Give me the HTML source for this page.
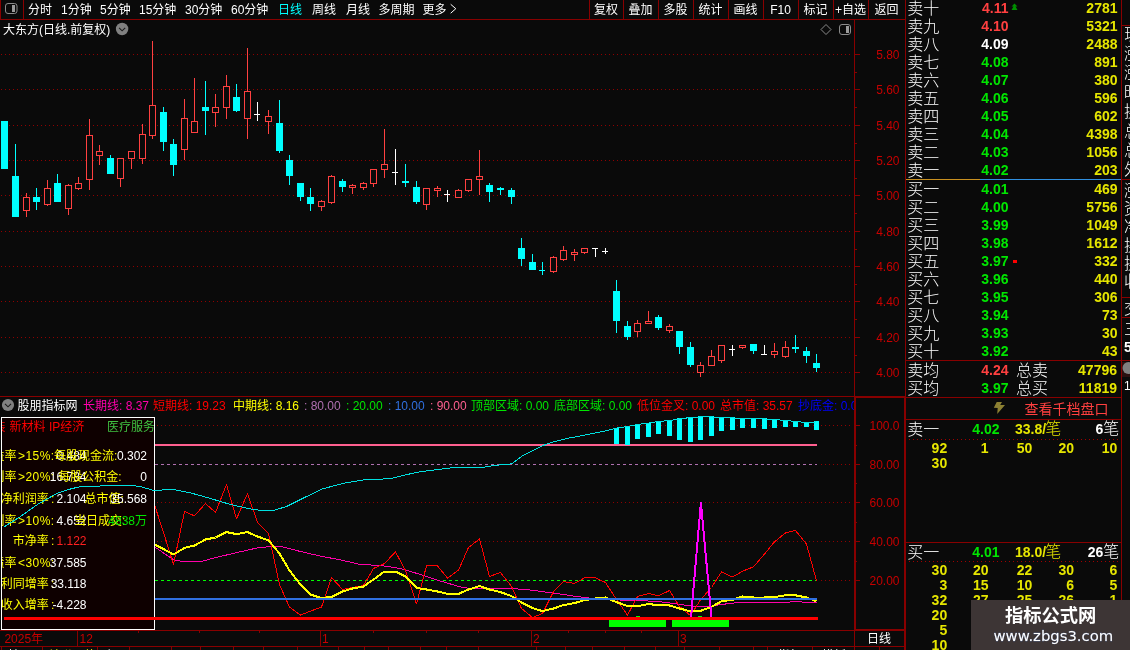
<!DOCTYPE html>
<html lang="zh-CN"><head><meta charset="utf-8"><title>大东方(日线.前复权)</title>
<style>html,body{margin:0;padding:0;background:#0a0a0a;overflow:hidden}body{width:1130px;height:650px;position:relative}svg{position:absolute;left:0;top:0;display:block;will-change:transform}svg text{font-family:'Liberation Sans','Noto Sans CJK SC',sans-serif;font-size:12px;white-space:pre}.g{shape-rendering:crispEdges}.aa{shape-rendering:geometricPrecision}</style>
</head><body>
<svg width="1130" height="650" viewBox="0 0 1130 650">
<rect width="1130" height="650" fill="#0a0a0a"/>
<defs><clipPath id="cpInd"><rect x="0" y="398" width="854" height="232"/></clipPath><clipPath id="cpBox"><rect x="2" y="418" width="152" height="211"/></clipPath><clipPath id="cpHdr"><rect x="0" y="398" width="854" height="18"/></clipPath><clipPath id="cpStrip"><rect x="1122" y="0" width="8" height="650"/></clipPath><clipPath id="cpBot"><rect x="0" y="648" width="1130" height="2"/></clipPath></defs>
<g class="g">
<line x1="1" y1="54.5" x2="851" y2="54.5" stroke="#900000" stroke-width="1" stroke-dasharray="1 3"/>
<line x1="1" y1="89.5" x2="851" y2="89.5" stroke="#900000" stroke-width="1" stroke-dasharray="1 3"/>
<line x1="1" y1="125.5" x2="851" y2="125.5" stroke="#900000" stroke-width="1" stroke-dasharray="1 3"/>
<line x1="1" y1="160.5" x2="851" y2="160.5" stroke="#900000" stroke-width="1" stroke-dasharray="1 3"/>
<line x1="1" y1="195.5" x2="851" y2="195.5" stroke="#900000" stroke-width="1" stroke-dasharray="1 3"/>
<line x1="1" y1="231.5" x2="851" y2="231.5" stroke="#900000" stroke-width="1" stroke-dasharray="1 3"/>
<line x1="1" y1="266.5" x2="851" y2="266.5" stroke="#900000" stroke-width="1" stroke-dasharray="1 3"/>
<line x1="1" y1="301.5" x2="851" y2="301.5" stroke="#900000" stroke-width="1" stroke-dasharray="1 3"/>
<line x1="1" y1="337.5" x2="851" y2="337.5" stroke="#900000" stroke-width="1" stroke-dasharray="1 3"/>
<line x1="1" y1="372.5" x2="851" y2="372.5" stroke="#900000" stroke-width="1" stroke-dasharray="1 3"/>
<rect x="0" y="19" width="905" height="1" fill="#880000"/>
<rect x="0" y="0" width="1" height="20" fill="#880000"/>
<rect x="23" y="0" width="1" height="20" fill="#880000"/>
<rect x="589" y="0" width="1" height="19" fill="#880000"/>
<rect x="623" y="0" width="1" height="19" fill="#880000"/>
<rect x="658" y="0" width="1" height="19" fill="#880000"/>
<rect x="693" y="0" width="1" height="19" fill="#880000"/>
<rect x="728" y="0" width="1" height="19" fill="#880000"/>
<rect x="763" y="0" width="1" height="19" fill="#880000"/>
<rect x="798" y="0" width="1" height="19" fill="#880000"/>
<rect x="833" y="0" width="1" height="19" fill="#880000"/>
<rect x="868" y="0" width="1" height="19" fill="#880000"/>
<rect x="854" y="20" width="1" height="376" fill="#880000"/>
<rect x="905" y="0" width="1" height="397" fill="#880000"/>
<rect x="0" y="396" width="854" height="1" fill="#880000"/>
<rect x="855" y="54" width="5" height="1" fill="#880000"/>
<rect x="855" y="72" width="2" height="1" fill="#880000"/>
<rect x="855" y="89" width="5" height="1" fill="#880000"/>
<rect x="855" y="107" width="2" height="1" fill="#880000"/>
<rect x="855" y="125" width="5" height="1" fill="#880000"/>
<rect x="855" y="143" width="2" height="1" fill="#880000"/>
<rect x="855" y="160" width="5" height="1" fill="#880000"/>
<rect x="855" y="178" width="2" height="1" fill="#880000"/>
<rect x="855" y="195" width="5" height="1" fill="#880000"/>
<rect x="855" y="213" width="2" height="1" fill="#880000"/>
<rect x="855" y="231" width="5" height="1" fill="#880000"/>
<rect x="855" y="249" width="2" height="1" fill="#880000"/>
<rect x="855" y="266" width="5" height="1" fill="#880000"/>
<rect x="855" y="284" width="2" height="1" fill="#880000"/>
<rect x="855" y="301" width="5" height="1" fill="#880000"/>
<rect x="855" y="319" width="2" height="1" fill="#880000"/>
<rect x="855" y="337" width="5" height="1" fill="#880000"/>
<rect x="855" y="355" width="2" height="1" fill="#880000"/>
<rect x="855" y="372" width="5" height="1" fill="#880000"/>
</g>
<g class="g">
<rect x="1" y="121" width="7" height="48" fill="#00ffff"/>
<rect x="15" y="144" width="1" height="32" fill="#00ffff"/>
<rect x="12" y="176" width="7" height="41" fill="#00ffff"/>
<rect x="26" y="193" width="1" height="4" fill="#ff4040"/>
<rect x="23.5" y="197.5" width="6" height="13" fill="#0a0a0a" stroke="#ff4040" stroke-width="1"/>
<rect x="26" y="211" width="1" height="6" fill="#ff4040"/>
<rect x="36" y="188" width="1" height="9" fill="#00ffff"/>
<rect x="33" y="197" width="7" height="5" fill="#00ffff"/>
<rect x="36" y="202" width="1" height="8" fill="#00ffff"/>
<rect x="47" y="180" width="1" height="8" fill="#ff4040"/>
<rect x="44.5" y="188.5" width="6" height="16" fill="#0a0a0a" stroke="#ff4040" stroke-width="1"/>
<rect x="47" y="205" width="1" height="1" fill="#ff4040"/>
<rect x="57" y="174" width="1" height="9" fill="#00ffff"/>
<rect x="54" y="183" width="7" height="19" fill="#00ffff"/>
<rect x="68" y="184" width="1" height="1" fill="#ff4040"/>
<rect x="65.5" y="185.5" width="6" height="23" fill="#0a0a0a" stroke="#ff4040" stroke-width="1"/>
<rect x="68" y="209" width="1" height="6" fill="#ff4040"/>
<rect x="78" y="177" width="1" height="6" fill="#ff4040"/>
<rect x="75.5" y="183.5" width="6" height="5" fill="#0a0a0a" stroke="#ff4040" stroke-width="1"/>
<rect x="78" y="189" width="1" height="1" fill="#ff4040"/>
<rect x="89" y="119" width="1" height="16" fill="#ff4040"/>
<rect x="86.5" y="135.5" width="6" height="44" fill="#0a0a0a" stroke="#ff4040" stroke-width="1"/>
<rect x="89" y="180" width="1" height="10" fill="#ff4040"/>
<rect x="99" y="145" width="1" height="6" fill="#ff4040"/>
<rect x="96.5" y="151.5" width="6" height="4" fill="#0a0a0a" stroke="#ff4040" stroke-width="1"/>
<rect x="99" y="156" width="1" height="9" fill="#ff4040"/>
<rect x="110" y="155" width="1" height="3" fill="#00ffff"/>
<rect x="107" y="158" width="7" height="16" fill="#00ffff"/>
<rect x="117.5" y="158.5" width="6" height="20" fill="#0a0a0a" stroke="#ff4040" stroke-width="1"/>
<rect x="120" y="179" width="1" height="8" fill="#ff4040"/>
<rect x="128.5" y="151.5" width="6" height="7" fill="#0a0a0a" stroke="#ff4040" stroke-width="1"/>
<rect x="131" y="159" width="1" height="10" fill="#ff4040"/>
<rect x="142" y="124" width="1" height="10" fill="#ff4040"/>
<rect x="139.5" y="134.5" width="6" height="24" fill="#0a0a0a" stroke="#ff4040" stroke-width="1"/>
<rect x="142" y="159" width="1" height="5" fill="#ff4040"/>
<rect x="152" y="41" width="1" height="64" fill="#ff4040"/>
<rect x="149.5" y="105.5" width="6" height="30" fill="#0a0a0a" stroke="#ff4040" stroke-width="1"/>
<rect x="152" y="136" width="1" height="3" fill="#ff4040"/>
<rect x="163" y="107" width="1" height="5" fill="#00ffff"/>
<rect x="160" y="112" width="7" height="30" fill="#00ffff"/>
<rect x="163" y="142" width="1" height="9" fill="#00ffff"/>
<rect x="173" y="139" width="1" height="5" fill="#00ffff"/>
<rect x="170" y="144" width="7" height="21" fill="#00ffff"/>
<rect x="173" y="165" width="1" height="11" fill="#00ffff"/>
<rect x="184" y="99" width="1" height="19" fill="#ff4040"/>
<rect x="181.5" y="118.5" width="6" height="31" fill="#0a0a0a" stroke="#ff4040" stroke-width="1"/>
<rect x="184" y="150" width="1" height="10" fill="#ff4040"/>
<rect x="194" y="78" width="1" height="43" fill="#ff4040"/>
<rect x="191.5" y="121.5" width="6" height="11" fill="#0a0a0a" stroke="#ff4040" stroke-width="1"/>
<rect x="205" y="81" width="1" height="26" fill="#00ffff"/>
<rect x="202" y="107" width="7" height="4" fill="#00ffff"/>
<rect x="205" y="111" width="1" height="24" fill="#00ffff"/>
<rect x="215" y="94" width="1" height="13" fill="#ff4040"/>
<rect x="212.5" y="107.5" width="6" height="5" fill="#0a0a0a" stroke="#ff4040" stroke-width="1"/>
<rect x="215" y="113" width="1" height="14" fill="#ff4040"/>
<rect x="226" y="75" width="1" height="11" fill="#ff4040"/>
<rect x="223.5" y="86.5" width="6" height="21" fill="#0a0a0a" stroke="#ff4040" stroke-width="1"/>
<rect x="226" y="108" width="1" height="11" fill="#ff4040"/>
<rect x="236" y="84" width="1" height="13" fill="#00ffff"/>
<rect x="233" y="97" width="7" height="14" fill="#00ffff"/>
<rect x="236" y="111" width="1" height="1" fill="#00ffff"/>
<rect x="247" y="48" width="1" height="43" fill="#ff4040"/>
<rect x="244.5" y="91.5" width="6" height="27" fill="#0a0a0a" stroke="#ff4040" stroke-width="1"/>
<rect x="247" y="119" width="1" height="20" fill="#ff4040"/>
<rect x="257" y="102" width="1" height="19" fill="#ffffff"/>
<rect x="254" y="114" width="6" height="1" fill="#ffffff"/>
<rect x="268" y="110" width="1" height="6" fill="#ff4040"/>
<rect x="265.5" y="116.5" width="6" height="5" fill="#0a0a0a" stroke="#ff4040" stroke-width="1"/>
<rect x="268" y="122" width="1" height="12" fill="#ff4040"/>
<rect x="279" y="100" width="1" height="23" fill="#00ffff"/>
<rect x="276" y="123" width="7" height="28" fill="#00ffff"/>
<rect x="279" y="151" width="1" height="2" fill="#00ffff"/>
<rect x="289" y="155" width="1" height="5" fill="#00ffff"/>
<rect x="286" y="160" width="7" height="16" fill="#00ffff"/>
<rect x="289" y="176" width="1" height="9" fill="#00ffff"/>
<rect x="297" y="183" width="7" height="14" fill="#00ffff"/>
<rect x="300" y="197" width="1" height="4" fill="#00ffff"/>
<rect x="310" y="188" width="1" height="9" fill="#00ffff"/>
<rect x="307" y="197" width="7" height="7" fill="#00ffff"/>
<rect x="310" y="204" width="1" height="7" fill="#00ffff"/>
<rect x="321" y="200" width="1" height="1" fill="#ff4040"/>
<rect x="318.5" y="201.5" width="6" height="5" fill="#0a0a0a" stroke="#ff4040" stroke-width="1"/>
<rect x="321" y="207" width="1" height="4" fill="#ff4040"/>
<rect x="331" y="175" width="1" height="1" fill="#ff4040"/>
<rect x="328.5" y="176.5" width="6" height="26" fill="#0a0a0a" stroke="#ff4040" stroke-width="1"/>
<rect x="331" y="203" width="1" height="1" fill="#ff4040"/>
<rect x="342" y="179" width="1" height="2" fill="#00ffff"/>
<rect x="339" y="181" width="7" height="6" fill="#00ffff"/>
<rect x="342" y="187" width="1" height="5" fill="#00ffff"/>
<rect x="352" y="184" width="1" height="1" fill="#ff4040"/>
<rect x="349.5" y="185.5" width="6" height="2" fill="#0a0a0a" stroke="#ff4040" stroke-width="1"/>
<rect x="352" y="188" width="1" height="6" fill="#ff4040"/>
<rect x="363" y="182" width="1" height="1" fill="#ff4040"/>
<rect x="360.5" y="183.5" width="6" height="4" fill="#0a0a0a" stroke="#ff4040" stroke-width="1"/>
<rect x="363" y="188" width="1" height="2" fill="#ff4040"/>
<rect x="370.5" y="169.5" width="6" height="14" fill="#0a0a0a" stroke="#ff4040" stroke-width="1"/>
<rect x="373" y="184" width="1" height="3" fill="#ff4040"/>
<rect x="384" y="129" width="1" height="35" fill="#ff4040"/>
<rect x="381.5" y="164.5" width="6" height="5" fill="#0a0a0a" stroke="#ff4040" stroke-width="1"/>
<rect x="384" y="170" width="1" height="8" fill="#ff4040"/>
<rect x="395" y="149" width="1" height="36" fill="#ffffff"/>
<rect x="392" y="172" width="6" height="1" fill="#ffffff"/>
<rect x="405" y="164" width="1" height="17" fill="#00ffff"/>
<rect x="402" y="181" width="7" height="2" fill="#00ffff"/>
<rect x="405" y="183" width="1" height="4" fill="#00ffff"/>
<rect x="416" y="181" width="1" height="6" fill="#00ffff"/>
<rect x="413" y="187" width="7" height="15" fill="#00ffff"/>
<rect x="416" y="202" width="1" height="2" fill="#00ffff"/>
<rect x="423.5" y="188.5" width="6" height="16" fill="#0a0a0a" stroke="#ff4040" stroke-width="1"/>
<rect x="426" y="205" width="1" height="5" fill="#ff4040"/>
<rect x="437" y="186" width="1" height="2" fill="#ff4040"/>
<rect x="434.5" y="188.5" width="6" height="2" fill="#0a0a0a" stroke="#ff4040" stroke-width="1"/>
<rect x="437" y="191" width="1" height="6" fill="#ff4040"/>
<rect x="447" y="190" width="1" height="12" fill="#ffffff"/>
<rect x="444" y="194" width="6" height="1" fill="#ffffff"/>
<rect x="458" y="189" width="1" height="1" fill="#ff4040"/>
<rect x="455.5" y="190.5" width="6" height="7" fill="#0a0a0a" stroke="#ff4040" stroke-width="1"/>
<rect x="465.5" y="179.5" width="6" height="11" fill="#0a0a0a" stroke="#ff4040" stroke-width="1"/>
<rect x="468" y="191" width="1" height="1" fill="#ff4040"/>
<rect x="479" y="150" width="1" height="26" fill="#ff4040"/>
<rect x="476.5" y="176.5" width="6" height="3" fill="#0a0a0a" stroke="#ff4040" stroke-width="1"/>
<rect x="479" y="180" width="1" height="15" fill="#ff4040"/>
<rect x="489" y="183" width="1" height="2" fill="#00ffff"/>
<rect x="486" y="185" width="7" height="7" fill="#00ffff"/>
<rect x="489" y="192" width="1" height="10" fill="#00ffff"/>
<rect x="500" y="187" width="1" height="1" fill="#00ffff"/>
<rect x="497" y="188" width="7" height="2" fill="#00ffff"/>
<rect x="500" y="190" width="1" height="5" fill="#00ffff"/>
<rect x="511" y="188" width="1" height="2" fill="#00ffff"/>
<rect x="508" y="190" width="7" height="7" fill="#00ffff"/>
<rect x="511" y="197" width="1" height="7" fill="#00ffff"/>
<rect x="521" y="238" width="1" height="10" fill="#00ffff"/>
<rect x="518" y="248" width="7" height="11" fill="#00ffff"/>
<rect x="521" y="259" width="1" height="7" fill="#00ffff"/>
<rect x="532" y="254" width="1" height="8" fill="#00ffff"/>
<rect x="529" y="262" width="7" height="8" fill="#00ffff"/>
<rect x="542" y="262" width="1" height="13" fill="#00ffff"/>
<rect x="539" y="270" width="6" height="1" fill="#00ffff"/>
<rect x="553" y="256" width="1" height="1" fill="#ff4040"/>
<rect x="550.5" y="257.5" width="6" height="14" fill="#0a0a0a" stroke="#ff4040" stroke-width="1"/>
<rect x="553" y="272" width="1" height="1" fill="#ff4040"/>
<rect x="563" y="246" width="1" height="4" fill="#ff4040"/>
<rect x="560.5" y="250.5" width="6" height="9" fill="#0a0a0a" stroke="#ff4040" stroke-width="1"/>
<rect x="563" y="260" width="1" height="1" fill="#ff4040"/>
<rect x="574" y="249" width="1" height="3" fill="#ff4040"/>
<rect x="571.5" y="252.5" width="6" height="2" fill="#0a0a0a" stroke="#ff4040" stroke-width="1"/>
<rect x="574" y="255" width="1" height="6" fill="#ff4040"/>
<rect x="581.5" y="248.5" width="6" height="4" fill="#0a0a0a" stroke="#ff4040" stroke-width="1"/>
<rect x="584" y="253" width="1" height="1" fill="#ff4040"/>
<rect x="595" y="248" width="1" height="9" fill="#ffffff"/>
<rect x="592" y="248" width="6" height="1" fill="#ffffff"/>
<rect x="605" y="248" width="1" height="6" fill="#ffffff"/>
<rect x="602" y="251" width="6" height="1" fill="#ffffff"/>
<rect x="616" y="280" width="1" height="11" fill="#00ffff"/>
<rect x="613" y="291" width="7" height="30" fill="#00ffff"/>
<rect x="616" y="321" width="1" height="12" fill="#00ffff"/>
<rect x="627" y="321" width="1" height="5" fill="#00ffff"/>
<rect x="624" y="326" width="7" height="11" fill="#00ffff"/>
<rect x="627" y="337" width="1" height="3" fill="#00ffff"/>
<rect x="637" y="320" width="1" height="3" fill="#ff4040"/>
<rect x="634.5" y="323.5" width="6" height="8" fill="#0a0a0a" stroke="#ff4040" stroke-width="1"/>
<rect x="637" y="332" width="1" height="5" fill="#ff4040"/>
<rect x="648" y="311" width="1" height="10" fill="#ff4040"/>
<rect x="645.5" y="321.5" width="6" height="2" fill="#0a0a0a" stroke="#ff4040" stroke-width="1"/>
<rect x="658" y="315" width="1" height="2" fill="#00ffff"/>
<rect x="655" y="317" width="7" height="11" fill="#00ffff"/>
<rect x="658" y="328" width="1" height="2" fill="#00ffff"/>
<rect x="669" y="324" width="1" height="2" fill="#ff4040"/>
<rect x="666.5" y="326.5" width="6" height="4" fill="#0a0a0a" stroke="#ff4040" stroke-width="1"/>
<rect x="669" y="331" width="1" height="2" fill="#ff4040"/>
<rect x="676" y="331" width="7" height="16" fill="#00ffff"/>
<rect x="679" y="347" width="1" height="7" fill="#00ffff"/>
<rect x="690" y="342" width="1" height="5" fill="#00ffff"/>
<rect x="687" y="347" width="7" height="18" fill="#00ffff"/>
<rect x="690" y="365" width="1" height="2" fill="#00ffff"/>
<rect x="700" y="362" width="1" height="3" fill="#ff4040"/>
<rect x="697.5" y="365.5" width="6" height="7" fill="#0a0a0a" stroke="#ff4040" stroke-width="1"/>
<rect x="700" y="373" width="1" height="4" fill="#ff4040"/>
<rect x="711" y="350" width="1" height="6" fill="#ff4040"/>
<rect x="708.5" y="356.5" width="6" height="9" fill="#0a0a0a" stroke="#ff4040" stroke-width="1"/>
<rect x="718.5" y="345.5" width="6" height="15" fill="#0a0a0a" stroke="#ff4040" stroke-width="1"/>
<rect x="721" y="361" width="1" height="2" fill="#ff4040"/>
<rect x="732" y="345" width="1" height="11" fill="#ffffff"/>
<rect x="729" y="349" width="6" height="1" fill="#ffffff"/>
<rect x="739.5" y="345.5" width="6" height="2" fill="#0a0a0a" stroke="#ff4040" stroke-width="1"/>
<rect x="742" y="348" width="1" height="1" fill="#ff4040"/>
<rect x="750" y="344" width="7" height="7" fill="#00ffff"/>
<rect x="753" y="351" width="1" height="3" fill="#00ffff"/>
<rect x="764" y="345" width="1" height="10" fill="#ffffff"/>
<rect x="761" y="354" width="6" height="1" fill="#ffffff"/>
<rect x="774" y="343" width="1" height="8" fill="#ff4040"/>
<rect x="771.5" y="351.5" width="6" height="3" fill="#0a0a0a" stroke="#ff4040" stroke-width="1"/>
<rect x="774" y="355" width="1" height="3" fill="#ff4040"/>
<rect x="785" y="341" width="1" height="6" fill="#ff4040"/>
<rect x="782.5" y="347.5" width="6" height="9" fill="#0a0a0a" stroke="#ff4040" stroke-width="1"/>
<rect x="785" y="357" width="1" height="1" fill="#ff4040"/>
<rect x="795" y="335" width="1" height="12" fill="#00ffff"/>
<rect x="792" y="347" width="7" height="2" fill="#00ffff"/>
<rect x="795" y="349" width="1" height="4" fill="#00ffff"/>
<rect x="806" y="347" width="1" height="4" fill="#00ffff"/>
<rect x="803" y="351" width="7" height="5" fill="#00ffff"/>
<rect x="806" y="356" width="1" height="7" fill="#00ffff"/>
<rect x="816" y="354" width="1" height="9" fill="#00ffff"/>
<rect x="813" y="363" width="7" height="5" fill="#00ffff"/>
<rect x="816" y="368" width="1" height="4" fill="#00ffff"/>
</g>
<g class="g">
<rect x="854" y="396" width="2" height="234" fill="#880000"/>
<rect x="855" y="396" width="51" height="2" fill="#880000"/>
<rect x="904" y="397" width="2" height="253" fill="#880000"/>
<rect x="0" y="630" width="905" height="1" fill="#880000"/>
<rect x="0" y="646" width="906" height="1" fill="#880000"/>
<rect x="854" y="630" width="1" height="20" fill="#880000"/>
<rect x="855" y="629" width="51" height="2" fill="#880000"/>
<rect x="879" y="647" width="1" height="3" fill="#880000"/>
<line x1="157" y1="425.5" x2="851" y2="425.5" stroke="#900000" stroke-width="1" stroke-dasharray="1 3"/>
<line x1="157" y1="502.5" x2="851" y2="502.5" stroke="#900000" stroke-width="1" stroke-dasharray="1 3"/>
<line x1="157" y1="541.5" x2="851" y2="541.5" stroke="#900000" stroke-width="1" stroke-dasharray="1 3"/>
<line x1="821" y1="580.5" x2="851" y2="580.5" stroke="#900000" stroke-width="1" stroke-dasharray="1 3"/>
<line x1="821" y1="464.5" x2="851" y2="464.5" stroke="#900000" stroke-width="1" stroke-dasharray="1 3"/>
<rect x="856" y="425" width="4" height="1" fill="#880000"/>
<rect x="856" y="464" width="4" height="1" fill="#880000"/>
<rect x="856" y="502" width="4" height="1" fill="#880000"/>
<rect x="856" y="541" width="4" height="1" fill="#880000"/>
<rect x="856" y="580" width="4" height="1" fill="#880000"/>
<rect x="856" y="445" width="1" height="1" fill="#880000"/>
<rect x="856" y="483" width="1" height="1" fill="#880000"/>
<rect x="856" y="522" width="1" height="1" fill="#880000"/>
<rect x="856" y="561" width="1" height="1" fill="#880000"/>
<rect x="155" y="444" width="662" height="2" fill="#ff6090"/>
<line x1="155" y1="464.5" x2="817" y2="464.5" stroke="#b070b0" stroke-width="1" stroke-dasharray="3 3"/>
<line x1="155" y1="580.5" x2="817" y2="580.5" stroke="#00ff00" stroke-width="1" stroke-dasharray="3 3"/>
</g>
<g clip-path="url(#cpInd)">
<polyline class="g" fill="none" stroke="#ff00aa" stroke-width="1" stroke-linejoin="round" points="152.5,546 155.5,547.5 174.1,560.1 184.9,561.9 199.5,561.9 216.1,557.5 236.9,552.5 257.5,547.9 270.5,546.5 282.5,546.9 300.5,551.5 320.5,556.1 340.5,559.9 360.5,564.5 380.5,565.5 400.5,568.5 420.5,574.5 440.5,581.1 460.5,586.9 470.5,588.5 486.5,588.9 516.5,588.9 526.5,589.5 556.5,593.5 576.5,596.5 596.5,598.9 616.5,599.9 636.5,600.5 658.5,601.5 680.5,604.5 691.3,606 711.8,606 721.8,604.5 732.3,603.1 743.5,602.5 785.5,602.5 795.8,601.3 806.5,602.5 816.5,602.5"/>
<polyline class="g" fill="none" stroke="#ff0000" stroke-width="1" stroke-linejoin="round" points="152.5,498.5 163.5,532.5 173.5,564.5 184.5,511.5 194.5,515.9 205.5,503.5 215.5,512.5 226.5,484.5 236.5,518.9 247.5,493.5 257.5,522.5 268.5,533.2 279.5,584.5 289.5,607.1 300.5,615.1 310.5,611.1 321.5,607.1 331.5,577.5 342.5,589.5 352.5,587.5 363.5,585.5 373.5,568.5 384.5,563.5 395.5,551.9 405.5,570.5 416.5,603.9 426.5,565.9 437.5,565.9 447.5,578.1 458.5,570.1 468.5,547.5 479.5,538.9 489.5,576.5 500.5,572.5 511.5,586.5 521.5,608.5 532.5,617.5 542.5,613.5 553.5,591.5 563.5,581.5 574.5,583.5 584.5,577.9 595.5,577.9 605.5,582.5 616.5,599.5 627.5,615.1 637.5,596.5 648.5,593.5 658.5,595.9 669.5,590.5 679.5,606.5 690.5,615.5 700.5,599.8 711.5,587.5 721.5,571.9 732.5,577 742.5,571.2 753.5,566.8 764.5,554 774.5,541.8 785.5,532.9 795.5,530.5 806.5,544 816.5,580.8"/>
<polyline class="g" fill="none" stroke="#ffff00" stroke-width="2" stroke-linejoin="round" points="152.5,543.5 163.5,549 173.5,554.5 184.5,547.9 194.5,545.5 205.5,539.5 215.5,537.5 226.5,532.1 236.5,534.1 247.5,532.1 257.5,536.5 268.5,540.3 279.5,553.5 289.5,570.5 300.5,584.5 310.5,594.5 321.5,598.1 331.5,596.9 342.5,591.5 352.5,588.5 363.5,586.5 373.5,579.5 384.5,571.5 395.5,571.5 405.5,576.5 416.5,587.9 426.5,589.5 437.5,591.5 447.5,593.9 458.5,593.9 468.5,589.5 479.5,586.1 489.5,589.5 500.5,592.1 511.5,596.1 521.5,602.5 532.5,608.1 542.5,611.1 553.5,608.5 563.5,605.1 574.5,603.1 584.5,600.1 595.5,598.5 605.5,597.5 616.5,602.1 627.5,606.1 637.5,606.1 648.5,604.1 658.5,605.1 669.5,605.5 679.5,608.5 690.5,611.3 700.5,610.9 711.5,606.9 721.5,601.3 732.5,599.8 742.5,596.5 753.5,597.5 764.5,597.5 774.5,597.1 785.5,595.3 795.5,595.3 806.5,597.5 816.5,601.3"/>
<rect class="g" x="155" y="598" width="662" height="2" fill="#3070e0"/>
<polyline class="g" fill="none" stroke="#ff00ff" stroke-width="2" stroke-linejoin="round" points="691,617.5 700.9,502.5 711.5,617.5"/>
<g class="g">
<rect x="614" y="428" width="5" height="16" fill="#00ffff"/>
<rect x="625" y="426" width="5" height="19" fill="#00ffff"/>
<rect x="635" y="424" width="5" height="15" fill="#00ffff"/>
<rect x="646" y="423" width="5" height="14" fill="#00ffff"/>
<rect x="656" y="421" width="5" height="13" fill="#00ffff"/>
<rect x="667" y="420" width="5" height="16" fill="#00ffff"/>
<rect x="677" y="418" width="5" height="22" fill="#00ffff"/>
<rect x="688" y="417" width="5" height="25" fill="#00ffff"/>
<rect x="698" y="416" width="5" height="24" fill="#00ffff"/>
<rect x="709" y="416" width="5" height="20" fill="#00ffff"/>
<rect x="719" y="417" width="5" height="14" fill="#00ffff"/>
<rect x="730" y="417" width="5" height="13" fill="#00ffff"/>
<rect x="740" y="418" width="5" height="10" fill="#00ffff"/>
<rect x="751" y="418" width="5" height="10" fill="#00ffff"/>
<rect x="762" y="418" width="5" height="11" fill="#00ffff"/>
<rect x="772" y="419" width="5" height="9" fill="#00ffff"/>
<rect x="783" y="420" width="5" height="7" fill="#00ffff"/>
<rect x="793" y="421" width="5" height="6" fill="#00ffff"/>
<rect x="804" y="422" width="5" height="5" fill="#00ffff"/>
<rect x="814" y="421" width="5" height="9" fill="#00ffff"/>
<rect x="609" y="620" width="57" height="7" fill="#00ff00"/>
<rect x="672" y="620" width="57" height="7" fill="#00ff00"/>
<rect x="636" y="616" width="4" height="1" fill="#00ff00"/>
<rect x="698" y="616" width="4" height="1" fill="#00ff00"/>
</g>
<rect class="g" x="1.5" y="417.5" width="153" height="212" fill="#0e0000" stroke="#ffffff" stroke-width="1"/>
<g clip-path="url(#cpBox)">
<text x="-6.6" y="431" fill="#ff0000">装</text>
<text x="9.6" y="431" fill="#ff0000">新材料</text>
<text x="49" y="431" fill="#ff0000">IP经济</text>
<text x="107" y="431" fill="#40c040">医疗服务</text>
<text x="16.5" y="460.2" fill="#ffff00" text-anchor="end">净资产收益率</text>
<text x="18" y="460.2" fill="#ffff00" letter-spacing="0.45">&gt;15%:</text>
<text x="86.5" y="460.2" fill="#fff" text-anchor="end">0.484</text>
<text x="16.5" y="481.2" fill="#ffff00" text-anchor="end">销售毛利率</text>
<text x="18" y="481.2" fill="#ffff00" letter-spacing="0.45">&gt;20%:</text>
<text x="86.5" y="481.2" fill="#fff" text-anchor="end">16.784</text>
<text x="48.7" y="502.6" fill="#ffff00" text-anchor="end">销售净利润率</text>
<text x="51" y="502.6" fill="#ffff00">:</text>
<text x="86.5" y="502.6" fill="#fff" text-anchor="end">2.104</text>
<text x="16.5" y="524.8" fill="#ffff00" text-anchor="end">销售净利率</text>
<text x="18" y="524.8" fill="#ffff00" letter-spacing="0.45">&gt;10%:</text>
<text x="86.5" y="524.8" fill="#fff" text-anchor="end">4.652</text>
<text x="48.7" y="545.4" fill="#ffff00" text-anchor="end">市净率</text>
<text x="51" y="545.4" fill="#ffff00">:</text>
<text x="86.5" y="545.4" fill="#ff2020" text-anchor="end">1.122</text>
<text x="16.5" y="567" fill="#ffff00" text-anchor="end">资产负债率</text>
<text x="18" y="567" fill="#ffff00" letter-spacing="0.45">&lt;30%:</text>
<text x="86.5" y="567" fill="#fff" text-anchor="end">37.585</text>
<text x="48.7" y="588.4" fill="#ffff00" text-anchor="end">净利同增率</text>
<text x="51" y="588.4" fill="#ffff00">:</text>
<text x="86.5" y="588.4" fill="#fff" text-anchor="end">33.118</text>
<text x="48.7" y="609.4" fill="#ffff00" text-anchor="end">营业收入增率</text>
<text x="51" y="609.4" fill="#ffff00">:</text>
<text x="86.5" y="609.4" fill="#fff" text-anchor="end">-4.228</text>
<text x="54" y="460.2" fill="#ffff00">每股现金流:</text>
<text x="147" y="460.2" fill="#fff" text-anchor="end">0.302</text>
<text x="58.3" y="481.2" fill="#ffff00">每股公积金:</text>
<text x="147" y="481.2" fill="#fff" text-anchor="end">0</text>
<text x="84.5" y="502.6" fill="#ffff00">总市值:</text>
<text x="147" y="502.6" fill="#fff" text-anchor="end">35.568</text>
<text x="74" y="524.8" fill="#ffff00">当日成交:</text>
<text x="147" y="524.8" fill="#00e600" text-anchor="end">4838万</text>
</g>
<polyline class="g" fill="none" stroke="#00e0e0" stroke-width="1" stroke-linejoin="round" points="4.2,526.8 19,517.5 37.5,504.5 55.9,493.9 66.9,489.9 79.9,486.7 96.5,486.2 114.9,485.2 129.5,485.2 140.5,486.5 153.5,490.5 170.5,489.5 176.5,490.1 190.5,492.9 210.5,498.5 230.5,504.5 250.5,508.9 264.5,510.9 274.5,510.1 286.5,506.5 302.5,498.5 322.5,488.9 342.5,483.5 366.5,479.5 389.5,478.8 417.1,472.2 453.9,467.5 481.5,467.5 495.4,465.3 511.5,463.9 523,455.4 541.4,446.2 550.5,442.7 569,438.1 596.5,432.8 605.5,430.9 616.5,428.1 627.5,426.5 637.5,424.5 648.5,423.1 658.5,421.5 669.5,420.5 679.5,418.9 690.5,417.5 700.5,416.9 711.5,416.9 721.5,417.5 732.5,417.9 742.5,418.5 753.5,418.9 764.5,418.9 774.5,419.5 785.5,420.5 795.5,421.5 806.5,422.5 816.5,421.9"/>
<rect class="g" x="4" y="617" width="814" height="3" fill="#ff0000"/>
</g>
<g class="g">
<rect x="77" y="630" width="1" height="16" fill="#880000"/>
<rect x="320" y="630" width="1" height="16" fill="#880000"/>
<rect x="531" y="630" width="1" height="16" fill="#880000"/>
<rect x="678" y="630" width="1" height="16" fill="#880000"/>
<rect x="1" y="647" width="1" height="3" fill="#880000"/>
<rect x="138" y="631" width="1" height="2" fill="#880000"/>
<rect x="199" y="631" width="1" height="2" fill="#880000"/>
<rect x="259" y="631" width="1" height="2" fill="#880000"/>
<rect x="373" y="631" width="1" height="2" fill="#880000"/>
<rect x="426" y="631" width="1" height="2" fill="#880000"/>
<rect x="478" y="631" width="1" height="2" fill="#880000"/>
<rect x="568" y="631" width="1" height="2" fill="#880000"/>
<rect x="605" y="631" width="1" height="2" fill="#880000"/>
<rect x="641" y="631" width="1" height="2" fill="#880000"/>
<rect x="42" y="647" width="1" height="3" fill="#880000"/>
<rect x="97" y="647" width="1" height="3" fill="#880000"/>
<rect x="129" y="647" width="1" height="3" fill="#880000"/>
<rect x="171" y="647" width="1" height="3" fill="#880000"/>
<rect x="200" y="647" width="1" height="3" fill="#880000"/>
<rect x="233" y="647" width="1" height="3" fill="#880000"/>
<rect x="263" y="647" width="1" height="3" fill="#880000"/>
<rect x="297" y="647" width="1" height="3" fill="#880000"/>
<rect x="338" y="647" width="1" height="3" fill="#880000"/>
<rect x="364" y="647" width="1" height="3" fill="#880000"/>
<rect x="388" y="647" width="1" height="3" fill="#880000"/>
<rect x="420" y="647" width="1" height="3" fill="#880000"/>
<rect x="446" y="647" width="1" height="3" fill="#880000"/>
<rect x="478" y="647" width="1" height="3" fill="#880000"/>
<rect x="536" y="647" width="1" height="3" fill="#880000"/>
<rect x="565" y="647" width="1" height="3" fill="#880000"/>
<rect x="592" y="647" width="1" height="3" fill="#880000"/>
<rect x="624" y="647" width="1" height="3" fill="#880000"/>
<rect x="655" y="647" width="1" height="3" fill="#880000"/>
<rect x="684" y="647" width="1" height="3" fill="#880000"/>
<rect x="719" y="647" width="1" height="3" fill="#880000"/>
<rect x="753" y="647" width="1" height="3" fill="#880000"/>
<rect x="767" y="647" width="1" height="3" fill="#880000"/>
<rect x="812" y="647" width="1" height="3" fill="#880000"/>
</g>
<text x="4.4" y="643" fill="#c80000">2025年</text>
<text x="79.6" y="643" fill="#c80000">12</text>
<text x="322" y="643" fill="#c80000">1</text>
<text x="533" y="643" fill="#c80000">2</text>
<text x="680" y="643" fill="#c80000">3</text>
<text x="879" y="643" fill="#fff" text-anchor="middle">日线</text>
<g clip-path="url(#cpBot)">
<text x="8" y="660" fill="#fff">扩展</text>
<text x="48" y="660" fill="#e6e600">关联</text>
<text x="84" y="660" fill="#e6e600">值</text>
<text x="104" y="660" fill="#fff">主</text>
<text x="778" y="660" fill="#fff">指标</text>
<text x="822" y="660" fill="#fff">模板</text>
</g>
<text x="899.5" y="59" fill="#c80000" text-anchor="end">5.80</text>
<text x="899.5" y="94" fill="#c80000" text-anchor="end">5.60</text>
<text x="899.5" y="130" fill="#c80000" text-anchor="end">5.40</text>
<text x="899.5" y="165" fill="#c80000" text-anchor="end">5.20</text>
<text x="899.5" y="200" fill="#c80000" text-anchor="end">5.00</text>
<text x="899.5" y="236" fill="#c80000" text-anchor="end">4.80</text>
<text x="899.5" y="271" fill="#c80000" text-anchor="end">4.60</text>
<text x="899.5" y="306" fill="#c80000" text-anchor="end">4.40</text>
<text x="899.5" y="342" fill="#c80000" text-anchor="end">4.20</text>
<text x="899.5" y="377" fill="#c80000" text-anchor="end">4.00</text>
<text x="899.5" y="430" fill="#c80000" text-anchor="end">100.0</text>
<text x="899.5" y="469" fill="#c80000" text-anchor="end">80.00</text>
<text x="899.5" y="507" fill="#c80000" text-anchor="end">60.00</text>
<text x="899.5" y="546" fill="#c80000" text-anchor="end">40.00</text>
<text x="899.5" y="585" fill="#c80000" text-anchor="end">20.00</text>
<rect class="aa" x="5.5" y="3.5" width="11.5" height="10" rx="2.5" fill="none" stroke="#8a8a8a" stroke-width="1"/>
<rect x="12" y="5" width="3" height="7" fill="#9a9a9a" class="g"/>
<text x="28" y="13.5" fill="#fff">分时</text>
<text x="61" y="13.5" fill="#fff">1分钟</text>
<text x="100" y="13.5" fill="#fff">5分钟</text>
<text x="139" y="13.5" fill="#fff">15分钟</text>
<text x="185" y="13.5" fill="#fff">30分钟</text>
<text x="231" y="13.5" fill="#fff">60分钟</text>
<text x="312" y="13.5" fill="#fff">周线</text>
<text x="346" y="13.5" fill="#fff">月线</text>
<text x="378.5" y="13.5" fill="#fff">多周期</text>
<text x="422.5" y="13.5" fill="#fff">更多</text>
<text x="278" y="13.5" fill="#00ffff">日线</text>
<polyline class="aa" fill="none" stroke="#fff" stroke-width="1" points="450.7,4.3 455.8,8.7 450.7,13.2"/>
<text x="606" y="13.5" fill="#fff" text-anchor="middle">复权</text>
<text x="640.5" y="13.5" fill="#fff" text-anchor="middle">叠加</text>
<text x="675.5" y="13.5" fill="#fff" text-anchor="middle">多股</text>
<text x="710.5" y="13.5" fill="#fff" text-anchor="middle">统计</text>
<text x="745.5" y="13.5" fill="#fff" text-anchor="middle">画线</text>
<text x="780.5" y="13.5" fill="#fff" text-anchor="middle">F10</text>
<text x="815.5" y="13.5" fill="#fff" text-anchor="middle">标记</text>
<text x="850.5" y="13.5" fill="#fff" text-anchor="middle">+自选</text>
<text x="886.5" y="13.5" fill="#fff" text-anchor="middle">返回</text>
<text x="3" y="34" fill="#fff">大东方(日线.前复权)</text>
<circle class="aa" cx="122.1" cy="29" r="6.2" fill="#808080"/><polyline class="aa" fill="none" stroke="#1a1a1a" stroke-width="1.1" points="119.1,27.8 122.1,30.8 125.2,27.8"/>
<path class="aa" d="M826 24.5 L831 29.5 L826 34.5 L821 29.5 Z" fill="none" stroke="#8a8a8a" stroke-width="1"/>
<rect class="aa" x="839.5" y="24.5" width="11" height="10" rx="2.5" fill="none" stroke="#8a8a8a" stroke-width="1"/>
<rect x="846" y="26" width="3" height="7" fill="#9a9a9a" class="g"/>
<circle class="aa" cx="8" cy="405" r="6.1" fill="#808080"/><polyline class="aa" fill="none" stroke="#1a1a1a" stroke-width="1.1" points="5,403.8 8,406.8 11,403.8"/>
<g clip-path="url(#cpHdr)">
<text x="17.5" y="410" fill="#fff">股朋指标网</text>
<text x="83" y="410" fill="#ff00aa">长期线: 8.37</text>
<text x="153" y="410" fill="#ff0000">短期线: 19.23</text>
<text x="233" y="410" fill="#ffff00">中期线: 8.16</text>
<text x="304" y="410" fill="#b070b0">: 80.00</text>
<text x="346" y="410" fill="#00e600">: 20.00</text>
<text x="388" y="410" fill="#3070e0">: 10.00</text>
<text x="430" y="410" fill="#ff6090">: 90.00</text>
<text x="471" y="410" fill="#00e600">顶部区域: 0.00</text>
<text x="554" y="410" fill="#00e600">底部区域: 0.00</text>
<text x="637" y="410" fill="#ff0000">低位金叉: 0.00</text>
<text x="720" y="410" fill="#ff0000">总市值: 35.57</text>
<text x="798" y="410" fill="#0000ff">抄底金: 0.00</text>
</g>
<g class="g">
<rect x="1121" y="0" width="1" height="650" fill="#880000"/>
<rect x="906" y="360" width="215" height="1" fill="#880000"/>
<rect x="906" y="397" width="215" height="1" fill="#880000"/>
<rect x="906" y="419" width="215" height="1" fill="#880000"/>
<rect x="906" y="542" width="215" height="1" fill="#880000"/>
<rect x="906" y="179" width="74" height="1" fill="#c89020"/>
<rect x="980" y="179" width="141" height="1" fill="#3090e0"/>
<line x1="909" y1="439.5" x2="1119" y2="439.5" stroke="#a00000" stroke-width="1" stroke-dasharray="1 3"/>
<line x1="909" y1="561.5" x2="1119" y2="561.5" stroke="#a00000" stroke-width="1" stroke-dasharray="1 3"/>
<rect x="1122" y="25" width="8" height="1" fill="#880000"/>
<rect x="1122" y="179" width="8" height="1" fill="#880000"/>
<rect x="1122" y="360" width="8" height="1" fill="#880000"/>
<rect x="1122" y="297" width="8" height="1" fill="#880000"/>
<rect x="1122" y="317" width="8" height="1" fill="#880000"/>
<rect x="1013" y="260" width="4" height="3" fill="#ff0000"/>
</g>
<path class="aa" d="M1014.5 3.5 L1017.5 6.5 L1015.5 6.5 L1017.5 10 L1011.5 10 L1013.5 6.5 L1011.5 6.5 Z" fill="#009000"/>
<text x="907.3" y="14" fill="#fff" style="font-size:16px;font-weight:300;">卖十</text>
<text x="1008.5" y="13" fill="#ff4040" text-anchor="end" style="font-size:14px;font-weight:bold;">4.11</text>
<text x="1117.5" y="13" fill="#e6e600" text-anchor="end" style="font-size:14px;font-weight:bold;">2781</text>
<text x="907.3" y="32" fill="#fff" style="font-size:16px;font-weight:300;">卖九</text>
<text x="1008.5" y="31" fill="#ff4040" text-anchor="end" style="font-size:14px;font-weight:bold;">4.10</text>
<text x="1117.5" y="31" fill="#e6e600" text-anchor="end" style="font-size:14px;font-weight:bold;">5321</text>
<text x="907.3" y="50" fill="#fff" style="font-size:16px;font-weight:300;">卖八</text>
<text x="1008.5" y="49" fill="#fff" text-anchor="end" style="font-size:14px;font-weight:bold;">4.09</text>
<text x="1117.5" y="49" fill="#e6e600" text-anchor="end" style="font-size:14px;font-weight:bold;">2488</text>
<text x="907.3" y="68" fill="#fff" style="font-size:16px;font-weight:300;">卖七</text>
<text x="1008.5" y="67" fill="#00e600" text-anchor="end" style="font-size:14px;font-weight:bold;">4.08</text>
<text x="1117.5" y="67" fill="#e6e600" text-anchor="end" style="font-size:14px;font-weight:bold;">891</text>
<text x="907.3" y="86" fill="#fff" style="font-size:16px;font-weight:300;">卖六</text>
<text x="1008.5" y="85" fill="#00e600" text-anchor="end" style="font-size:14px;font-weight:bold;">4.07</text>
<text x="1117.5" y="85" fill="#e6e600" text-anchor="end" style="font-size:14px;font-weight:bold;">380</text>
<text x="907.3" y="104" fill="#fff" style="font-size:16px;font-weight:300;">卖五</text>
<text x="1008.5" y="103" fill="#00e600" text-anchor="end" style="font-size:14px;font-weight:bold;">4.06</text>
<text x="1117.5" y="103" fill="#e6e600" text-anchor="end" style="font-size:14px;font-weight:bold;">596</text>
<text x="907.3" y="122" fill="#fff" style="font-size:16px;font-weight:300;">卖四</text>
<text x="1008.5" y="121" fill="#00e600" text-anchor="end" style="font-size:14px;font-weight:bold;">4.05</text>
<text x="1117.5" y="121" fill="#e6e600" text-anchor="end" style="font-size:14px;font-weight:bold;">602</text>
<text x="907.3" y="140" fill="#fff" style="font-size:16px;font-weight:300;">卖三</text>
<text x="1008.5" y="139" fill="#00e600" text-anchor="end" style="font-size:14px;font-weight:bold;">4.04</text>
<text x="1117.5" y="139" fill="#e6e600" text-anchor="end" style="font-size:14px;font-weight:bold;">4398</text>
<text x="907.3" y="158" fill="#fff" style="font-size:16px;font-weight:300;">卖二</text>
<text x="1008.5" y="157" fill="#00e600" text-anchor="end" style="font-size:14px;font-weight:bold;">4.03</text>
<text x="1117.5" y="157" fill="#e6e600" text-anchor="end" style="font-size:14px;font-weight:bold;">1056</text>
<text x="907.3" y="176" fill="#fff" style="font-size:16px;font-weight:300;">卖一</text>
<text x="1008.5" y="175" fill="#00e600" text-anchor="end" style="font-size:14px;font-weight:bold;">4.02</text>
<text x="1117.5" y="175" fill="#e6e600" text-anchor="end" style="font-size:14px;font-weight:bold;">203</text>
<text x="907.3" y="195" fill="#fff" style="font-size:16px;font-weight:300;">买一</text>
<text x="1008.5" y="194" fill="#00e600" text-anchor="end" style="font-size:14px;font-weight:bold;">4.01</text>
<text x="1117.5" y="194" fill="#e6e600" text-anchor="end" style="font-size:14px;font-weight:bold;">469</text>
<text x="907.3" y="213" fill="#fff" style="font-size:16px;font-weight:300;">买二</text>
<text x="1008.5" y="212" fill="#00e600" text-anchor="end" style="font-size:14px;font-weight:bold;">4.00</text>
<text x="1117.5" y="212" fill="#e6e600" text-anchor="end" style="font-size:14px;font-weight:bold;">5756</text>
<text x="907.3" y="231" fill="#fff" style="font-size:16px;font-weight:300;">买三</text>
<text x="1008.5" y="230" fill="#00e600" text-anchor="end" style="font-size:14px;font-weight:bold;">3.99</text>
<text x="1117.5" y="230" fill="#e6e600" text-anchor="end" style="font-size:14px;font-weight:bold;">1049</text>
<text x="907.3" y="249" fill="#fff" style="font-size:16px;font-weight:300;">买四</text>
<text x="1008.5" y="248" fill="#00e600" text-anchor="end" style="font-size:14px;font-weight:bold;">3.98</text>
<text x="1117.5" y="248" fill="#e6e600" text-anchor="end" style="font-size:14px;font-weight:bold;">1612</text>
<text x="907.3" y="267" fill="#fff" style="font-size:16px;font-weight:300;">买五</text>
<text x="1008.5" y="266" fill="#00e600" text-anchor="end" style="font-size:14px;font-weight:bold;">3.97</text>
<text x="1117.5" y="266" fill="#e6e600" text-anchor="end" style="font-size:14px;font-weight:bold;">332</text>
<text x="907.3" y="285" fill="#fff" style="font-size:16px;font-weight:300;">买六</text>
<text x="1008.5" y="284" fill="#00e600" text-anchor="end" style="font-size:14px;font-weight:bold;">3.96</text>
<text x="1117.5" y="284" fill="#e6e600" text-anchor="end" style="font-size:14px;font-weight:bold;">440</text>
<text x="907.3" y="303" fill="#fff" style="font-size:16px;font-weight:300;">买七</text>
<text x="1008.5" y="302" fill="#00e600" text-anchor="end" style="font-size:14px;font-weight:bold;">3.95</text>
<text x="1117.5" y="302" fill="#e6e600" text-anchor="end" style="font-size:14px;font-weight:bold;">306</text>
<text x="907.3" y="321" fill="#fff" style="font-size:16px;font-weight:300;">买八</text>
<text x="1008.5" y="320" fill="#00e600" text-anchor="end" style="font-size:14px;font-weight:bold;">3.94</text>
<text x="1117.5" y="320" fill="#e6e600" text-anchor="end" style="font-size:14px;font-weight:bold;">73</text>
<text x="907.3" y="339" fill="#fff" style="font-size:16px;font-weight:300;">买九</text>
<text x="1008.5" y="338" fill="#00e600" text-anchor="end" style="font-size:14px;font-weight:bold;">3.93</text>
<text x="1117.5" y="338" fill="#e6e600" text-anchor="end" style="font-size:14px;font-weight:bold;">30</text>
<text x="907.3" y="357" fill="#fff" style="font-size:16px;font-weight:300;">买十</text>
<text x="1008.5" y="356" fill="#00e600" text-anchor="end" style="font-size:14px;font-weight:bold;">3.92</text>
<text x="1117.5" y="356" fill="#e6e600" text-anchor="end" style="font-size:14px;font-weight:bold;">43</text>
<text x="907.3" y="376" fill="#fff" style="font-size:16px;font-weight:300;">卖均</text>
<text x="1008.5" y="375" fill="#ff4040" text-anchor="end" style="font-size:14px;font-weight:bold;">4.24</text>
<text x="1016" y="376" fill="#fff" style="font-size:16px;font-weight:300;">总卖</text>
<text x="1117" y="375" fill="#e6e600" text-anchor="end" style="font-size:14px;font-weight:bold;">47796</text>
<text x="907.3" y="393.5" fill="#fff" style="font-size:16px;font-weight:300;">买均</text>
<text x="1008.5" y="392.5" fill="#00e600" text-anchor="end" style="font-size:14px;font-weight:bold;">3.97</text>
<text x="1016" y="393.5" fill="#fff" style="font-size:16px;font-weight:300;">总买</text>
<text x="1117" y="392.5" fill="#e6e600" text-anchor="end" style="font-size:14px;font-weight:bold;">11819</text>
<path class="aa" d="M996.7 401.9 L1002 401.9 L1000.2 404.9 L1005 405.1 L997.2 413.9 L997.7 408.1 L993.8 407.7 Z" fill="#8c8032"/>
<text x="1024.5" y="413.5" fill="#ff4040" style="font-size:14px;">查看千档盘口</text>
<text x="907.3" y="435.3" fill="#fff" style="font-size:16px;font-weight:300;">卖一</text>
<text x="999.5" y="434.3" fill="#00e600" text-anchor="end" style="font-size:14px;font-weight:bold;">4.02</text>
<text x="1015" y="434.3" fill="#e6e600"><tspan style="font-size:14px;font-weight:bold">33.8/</tspan><tspan style="font-size:16px;font-weight:300" dx="-1">笔</tspan></text>
<text x="1119.3" y="434.3" fill="#fff" text-anchor="end"><tspan style="font-size:14px;font-weight:bold">6</tspan><tspan style="font-size:16px;font-weight:300">笔</tspan></text>
<text x="907.3" y="557.5" fill="#fff" style="font-size:16px;font-weight:300;">买一</text>
<text x="999.5" y="556.5" fill="#00e600" text-anchor="end" style="font-size:14px;font-weight:bold;">4.01</text>
<text x="1015" y="556.5" fill="#e6e600"><tspan style="font-size:14px;font-weight:bold">18.0/</tspan><tspan style="font-size:16px;font-weight:300" dx="-1">笔</tspan></text>
<text x="1119.3" y="556.5" fill="#fff" text-anchor="end"><tspan style="font-size:14px;font-weight:bold">26</tspan><tspan style="font-size:16px;font-weight:300">笔</tspan></text>
<text x="947.2" y="453" fill="#e6e600" text-anchor="end" style="font-size:14px;font-weight:bold;">92</text>
<text x="988.5" y="453" fill="#e6e600" text-anchor="end" style="font-size:14px;font-weight:bold;">1</text>
<text x="1032.3" y="453" fill="#e6e600" text-anchor="end" style="font-size:14px;font-weight:bold;">50</text>
<text x="1074" y="453" fill="#e6e600" text-anchor="end" style="font-size:14px;font-weight:bold;">20</text>
<text x="1117.4" y="453" fill="#e6e600" text-anchor="end" style="font-size:14px;font-weight:bold;">10</text>
<text x="947.2" y="468" fill="#e6e600" text-anchor="end" style="font-size:14px;font-weight:bold;">30</text>
<text x="947.2" y="575" fill="#e6e600" text-anchor="end" style="font-size:14px;font-weight:bold;">30</text>
<text x="988.5" y="575" fill="#e6e600" text-anchor="end" style="font-size:14px;font-weight:bold;">20</text>
<text x="1032.3" y="575" fill="#e6e600" text-anchor="end" style="font-size:14px;font-weight:bold;">22</text>
<text x="1074" y="575" fill="#e6e600" text-anchor="end" style="font-size:14px;font-weight:bold;">30</text>
<text x="1117.4" y="575" fill="#e6e600" text-anchor="end" style="font-size:14px;font-weight:bold;">6</text>
<text x="947.2" y="590" fill="#e6e600" text-anchor="end" style="font-size:14px;font-weight:bold;">3</text>
<text x="988.5" y="590" fill="#e6e600" text-anchor="end" style="font-size:14px;font-weight:bold;">15</text>
<text x="1032.3" y="590" fill="#e6e600" text-anchor="end" style="font-size:14px;font-weight:bold;">10</text>
<text x="1074" y="590" fill="#e6e600" text-anchor="end" style="font-size:14px;font-weight:bold;">6</text>
<text x="1117.4" y="590" fill="#e6e600" text-anchor="end" style="font-size:14px;font-weight:bold;">5</text>
<text x="947.2" y="605" fill="#e6e600" text-anchor="end" style="font-size:14px;font-weight:bold;">32</text>
<text x="988.5" y="605" fill="#e6e600" text-anchor="end" style="font-size:14px;font-weight:bold;">27</text>
<text x="1032.3" y="605" fill="#e6e600" text-anchor="end" style="font-size:14px;font-weight:bold;">25</text>
<text x="1074" y="605" fill="#e6e600" text-anchor="end" style="font-size:14px;font-weight:bold;">26</text>
<text x="1117.4" y="605" fill="#e6e600" text-anchor="end" style="font-size:14px;font-weight:bold;">1</text>
<text x="947.2" y="620" fill="#e6e600" text-anchor="end" style="font-size:14px;font-weight:bold;">20</text>
<text x="947.2" y="635" fill="#e6e600" text-anchor="end" style="font-size:14px;font-weight:bold;">5</text>
<text x="947.2" y="650" fill="#e6e600" text-anchor="end" style="font-size:14px;font-weight:bold;">10</text>
<g clip-path="url(#cpStrip)">
<text x="1124" y="39.5" fill="#fff" style="font-size:16px;font-weight:300;">现</text>
<text x="1124" y="58.9" fill="#fff" style="font-size:16px;font-weight:300;">涨</text>
<text x="1124" y="78.3" fill="#fff" style="font-size:16px;font-weight:300;">涨</text>
<text x="1124" y="97.7" fill="#fff" style="font-size:16px;font-weight:300;">昨</text>
<text x="1124" y="117.1" fill="#fff" style="font-size:16px;font-weight:300;">换</text>
<text x="1124" y="136.5" fill="#fff" style="font-size:16px;font-weight:300;">总</text>
<text x="1124" y="155.9" fill="#fff" style="font-size:16px;font-weight:300;">总</text>
<text x="1124" y="175.3" fill="#fff" style="font-size:16px;font-weight:300;">外</text>
<text x="1124" y="196" fill="#fff" style="font-size:16px;font-weight:300;">涨</text>
<text x="1124" y="214.2" fill="#fff" style="font-size:16px;font-weight:300;">资</text>
<text x="1124" y="232.4" fill="#fff" style="font-size:16px;font-weight:300;">净</text>
<text x="1124" y="250.6" fill="#fff" style="font-size:16px;font-weight:300;">换</text>
<text x="1124" y="268.8" fill="#fff" style="font-size:16px;font-weight:300;">换</text>
<text x="1124" y="287" fill="#fff" style="font-size:16px;font-weight:300;">收</text>
<text x="1124" y="313.7" fill="#fff" style="font-size:16px;font-weight:300;">交</text>
<text x="1124" y="335" fill="#fff" style="font-size:16px;font-weight:300;">三</text>
<text x="1124" y="352.4" fill="#fff" style="font-size:14px;font-weight:bold;">5</text>
<rect x="1122" y="362" width="8" height="15" fill="#2a1010" class="g"/>
<circle class="aa" cx="1128.5" cy="368" r="6" fill="#808080"/>
<text x="1124" y="389.5" fill="#fff">1</text>
</g>
<rect x="971" y="600" width="159" height="50" fill="#3d3535" class="g"/>
<text x="1050.6" y="622.3" fill="#fff" text-anchor="middle" style="font-size:18.3px;font-weight:bold;">指标公式网</text>
<text x="1053.3" y="641" fill="#fff" text-anchor="middle" style="font-size:14.8px;font-family:'DejaVu Sans','Liberation Sans',sans-serif;" stroke="#6080c0" stroke-width="0.3" paint-order="stroke">www.zbgs3.com</text>
</svg>
</body></html>
